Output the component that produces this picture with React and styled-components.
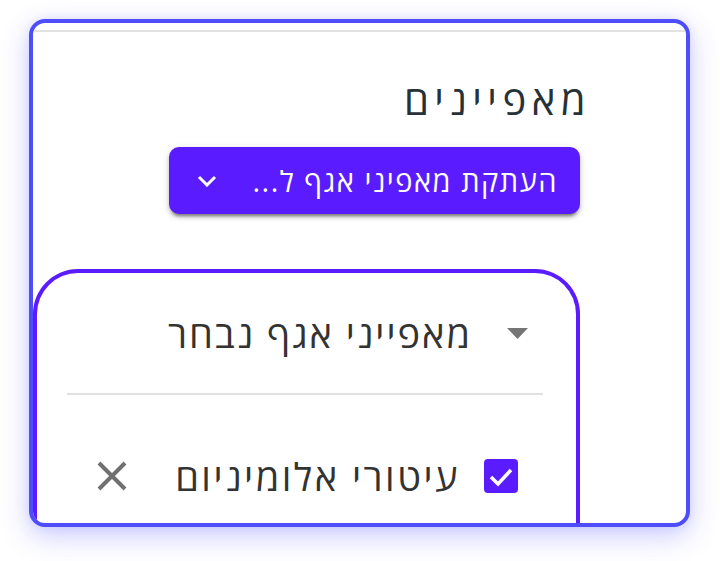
import React from 'react';
import styled, { createGlobalStyle } from 'styled-components';

const GlobalStyle = createGlobalStyle`
body {
  margin: 0;
  background: #fff;
  font-family: "Open Sans", "DejaVu Sans", sans-serif;
}
`

const Page = styled.div`
box-sizing: border-box;
min-height: 100vh;
padding: 19px 0 0 29px;
`

const Card = styled.div`
box-sizing: border-box;
width: 661px;
height: 508px;
border: 4px solid #4d4dfc;
border-radius: 16px;
background: #fff;
overflow: hidden;
box-shadow: 0 9px 28px rgba(84, 84, 255, 0.3), 0 0 10px rgba(84, 84, 255, 0.12);
`

const TopStrip = styled.div`
height: 7px;
border-bottom: 2px solid #e2e2e2;
`

const Content = styled.div`
direction: rtl;
display: flex;
flex-direction: column;
align-items: flex-start;
padding-right: 106px;
`

const Title = styled.h2`
margin: 44px -11px 0 0;
font-size: 40px;
line-height: 48px;
letter-spacing: 5.5px;
font-weight: 400;
color: #263238;
`

const CopyButton = styled.button`
box-sizing: border-box;
direction: rtl;
margin-top: 23px;
width: 411px;
height: 67px;
display: flex;
align-items: center;
padding: 0 22px 0 28px;
border: none;
border-radius: 10px;
background: #5a1cff;
color: #fff;
font-family: inherit;
font-size: 29px;
letter-spacing: 1.5px;
box-shadow: 0 5px 3px -3px rgba(0, 0, 0, 0.35), 0 3px 4px rgba(0, 0, 0, 0.18), 0 2px 8px rgba(0, 0, 0, 0.12);
`

const ButtonLabel = styled.span`
flex: 1;
text-align: right;
white-space: nowrap;
`

const Panel = styled.div`
box-sizing: border-box;
margin-top: 55px;
width: 547px;
height: 300px;
border: 4px solid #5a1cff;
border-bottom: none;
border-radius: 45px 45px 0 0;
`

const HeadRow = styled.div`
height: 120px;
display: flex;
align-items: center;
padding-right: 48px;
`

const RowText = styled.span`
font-size: 38px;
line-height: 48px;
letter-spacing: ${p => p.$spacing}px;
color: #333;
margin-right: ${p => p.$gap}px;
`

const Divider = styled.div`
height: 2px;
margin: 0 33px 0 30px;
background: #e0e0e0;
`

const ItemRow = styled.div`
margin-top: 57px;
height: 48px;
display: flex;
align-items: center;
padding-right: 58px;
`

const RemoveIcon = styled.svg`
margin-right: auto;
margin-left: 60px;
`

const Caret = () => (
    <svg width="21" height="11" viewBox="0 0 21 11">
        <polygon points="0,0 21,0 10.5,11" fill="#757575"/>
    </svg>
)

const Chevron = () => (
    <svg width="20" height="12" viewBox="0 0 20 12">
        <polyline points="2,2 10,10 18,2" fill="none" stroke="#fff" strokeWidth="3"/>
    </svg>
)

const CheckBox = () => (
    <svg width="34" height="34" viewBox="0 0 34 34">
        <rect width="34" height="34" rx="4" fill="#5a1cff"/>
        <polyline points="7,18 14,25 27,11" fill="none" stroke="#fff" strokeWidth="3.5"/>
    </svg>
)

const App = () => {
    return (
        <Page>
            <GlobalStyle/>
            <Card>
                <TopStrip/>
                <Content>
                    <Title>מאפיינים</Title>
                    <CopyButton>
                        <ButtonLabel>העתקת מאפיני אגף ל...</ButtonLabel>
                        <Chevron/>
                    </CopyButton>
                    <Panel>
                        <HeadRow>
                            <Caret/>
                            <RowText $gap={35} $spacing={2}>מאפייני אגף נבחר</RowText>
                        </HeadRow>
                        <Divider/>
                        <ItemRow>
                            <CheckBox/>
                            <RowText $gap={24} $spacing={2.5}>עיטורי אלומיניום</RowText>
                            <RemoveIcon width="30" height="30" viewBox="0 0 30 30">
                                <path d="M2 2 28 28 M28 2 2 28" stroke="#707070" strokeWidth="4"/>
                            </RemoveIcon>
                        </ItemRow>
                    </Panel>
                </Content>
            </Card>
        </Page>
    )
}

export default App;
